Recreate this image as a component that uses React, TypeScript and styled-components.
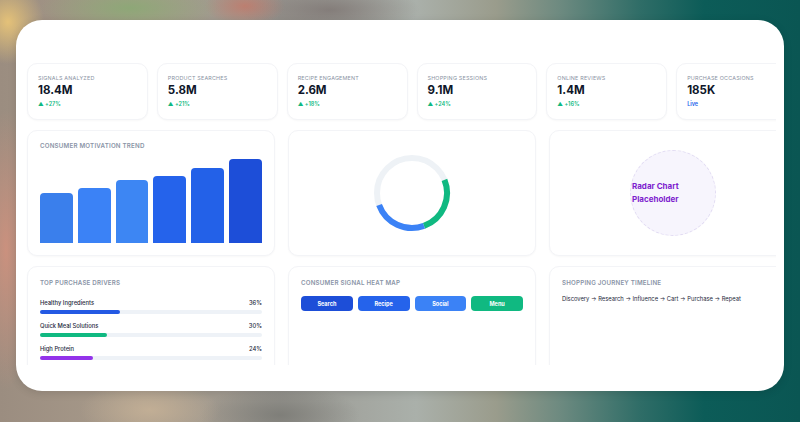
import React from 'react';
import styled, { createGlobalStyle } from 'styled-components';

const GlobalStyle = createGlobalStyle`
    * { box-sizing: border-box; }
    html, body { margin: 0; padding: 0; }
    body {
        font-family: Inter, "DejaVu Sans", sans-serif;
        background: #0b5b57;
    }
`

const stats = [
    { label: 'Signals Analyzed', value: '18.4M', change: '▲ +27%' },
    { label: 'Product Searches', value: '5.8M', change: '▲ +21%' },
    { label: 'Recipe Engagement', value: '2.6M', change: '▲ +18%' },
    { label: 'Shopping Sessions', value: '9.1M', change: '▲ +24%' },
    { label: 'Online Reviews', value: '1.4M', change: '▲ +16%' },
    { label: 'Purchase Occasions', value: '185K', change: 'Live', live: true },
];

const bars = [
    { h: 50, color: '#3a7fec' },
    { h: 55, color: '#3b82f6' },
    { h: 63, color: '#3d86f3' },
    { h: 67, color: '#2563eb' },
    { h: 75, color: '#2361e8' },
    { h: 84, color: '#1d4ed8' },
];

const drivers = [
    { name: 'Healthy Ingredients', pct: 36, color: '#2459e3' },
    { name: 'Quick Meal Solutions', pct: 30, color: '#10b981' },
    { name: 'High Protein', pct: 24, color: '#9333ea' },
];

const heat = [
    { name: 'Search', color: '#1d4ed8' },
    { name: 'Recipe', color: '#2563eb' },
    { name: 'Social', color: '#3b82f6' },
    { name: 'Menu', color: '#10b981' },
];

// arc on the donut, angles in degrees from 3 o'clock, clockwise
const arc = (from: number, to: number, r = 35, c = 40) => {
    const rad = (d: number) => (d * Math.PI) / 180;
    const x1 = c + r * Math.cos(rad(from));
    const y1 = c + r * Math.sin(rad(from));
    const x2 = c + r * Math.cos(rad(to));
    const y2 = c + r * Math.sin(rad(to));
    const large = to - from > 180 ? 1 : 0;
    return `M ${x1} ${y1} A ${r} ${r} 0 ${large} 1 ${x2} ${y2}`;
};

const Donut: React.FC = () => (
    <svg width="80" height="80" viewBox="0 0 80 80">
        <circle cx="40" cy="40" r="35" fill="none" stroke="#eef2f6" strokeWidth="6" />
        <path d={ arc(-22, 70) } fill="none" stroke="#10b981" strokeWidth="6" />
        <path d={ arc(70, 160) } fill="none" stroke="#3b82f6" strokeWidth="6" />
    </svg>
);

export default function App() {
    return (
        <Page>
            <GlobalStyle />
            <Panel>
                <Viewport>
                    <Dashboard>
                        <StatGrid>
                            { stats.map(s => (
                                <StatCard key={ s.label }>
                                    <StatLabel>{ s.label }</StatLabel>
                                    <StatValue>{ s.value }</StatValue>
                                    <StatChange live={ !!s.live }>{ s.change }</StatChange>
                                </StatCard>
                            )) }
                        </StatGrid>

                        <Row>
                            <ChartCard>
                                <CardTitle>Consumer Motivation Trend</CardTitle>
                                <Bars>
                                    { bars.map((b, i) => (
                                        <Bar key={ i } color={ b.color } style={{ height: b.h }} />
                                    )) }
                                </Bars>
                            </ChartCard>
                            <CenterCard>
                                <Donut />
                            </CenterCard>
                            <CenterCard>
                                <Radar>Radar Chart Placeholder</Radar>
                            </CenterCard>
                        </Row>

                        <Row>
                            <ListCard>
                                <CardTitle>Top Purchase Drivers</CardTitle>
                                <DriverList>
                                    { drivers.map(d => (
                                        <Driver key={ d.name }>
                                            <DriverHead>
                                                <span>{ d.name }</span>
                                                <span>{ d.pct }%</span>
                                            </DriverHead>
                                            <Track>
                                                <Fill color={ d.color } style={{ width: `${ d.pct }%` }} />
                                            </Track>
                                        </Driver>
                                    )) }
                                </DriverList>
                            </ListCard>
                            <ListCard>
                                <CardTitle>Consumer Signal Heat Map</CardTitle>
                                <HeatGrid>
                                    { heat.map(h => (
                                        <HeatCell key={ h.name } color={ h.color }>{ h.name }</HeatCell>
                                    )) }
                                </HeatGrid>
                            </ListCard>
                            <ListCard>
                                <CardTitle>Shopping Journey Timeline</CardTitle>
                                <Journey>Discovery → Research → Influence → Cart → Purchase → Repeat</Journey>
                            </ListCard>
                        </Row>
                    </Dashboard>
                </Viewport>
            </Panel>
        </Page>
    );
}

const Page = styled.div`
    display: flex;
    width: 800px;
    height: 422px;
    padding: 20px 16px 31px 16px;
    overflow: hidden;
    background:
        radial-gradient(ellipse 36px 42px at 8px 22px, rgba(232, 196, 120, 0.95), rgba(232, 196, 120, 0) 100%),
        radial-gradient(ellipse 90px 26px at 130px 8px, rgba(140, 168, 118, 0.95), rgba(140, 168, 118, 0) 100%),
        radial-gradient(ellipse 40px 20px at 245px 6px, rgba(196, 120, 104, 0.8), rgba(196, 120, 104, 0) 100%),
        radial-gradient(ellipse 90px 26px at 330px 10px, rgba(120, 110, 108, 0.7), rgba(120, 110, 108, 0) 100%),
        radial-gradient(ellipse 30px 140px at 6px 250px, rgba(205, 145, 126, 0.95), rgba(205, 145, 126, 0) 100%),
        radial-gradient(ellipse 70px 30px at 150px 410px, rgba(196, 176, 150, 0.9), rgba(196, 176, 150, 0) 100%),
        radial-gradient(ellipse 80px 30px at 280px 415px, rgba(120, 120, 115, 0.8), rgba(120, 120, 115, 0) 100%),
        linear-gradient(90deg, #9b8d80 0%, #a99c8c 18%, #9a9892 35%, #aab0aa 52%, #9a9c8c 62%, #6d8a80 70%, #2f6d67 80%, #0c5c58 88%, #0a5653 100%);
`

const Panel = styled.div`
    flex: 1;
    min-width: 0;
    display: flex;
    padding: 38px 8px 26px 6px;
    border-radius: 26px;
    background: #fff;
    box-shadow: 0 2px 8px rgba(0, 0, 0, 0.12);
`

const Viewport = styled.div`
    flex: 1;
    min-width: 0;
    padding: 5px 0 0 5px;
    overflow: hidden;
`

const Dashboard = styled.div`
    display: flex;
    flex-direction: column;
    gap: 10px;
    width: 770px;
`

const Card = styled.div`
    border: 1px solid #f3f4f7;
    border-radius: 10px;
    background: #fff;
    box-shadow: 0 1px 2px rgba(15, 23, 42, 0.03);
`

const StatGrid = styled.div`
    display: grid;
    grid-template-columns: repeat(6, 1fr);
    gap: 9px;
`

const StatCard = styled(Card)`
    height: 57px;
    padding: 10px 10px;
`

const StatLabel = styled.div`
    font-size: 5.4px;
    line-height: 8px;
    letter-spacing: 0.2px;
    text-transform: uppercase;
    color: #8a93a3;
`

const StatValue = styled.div`
    margin-top: 2px;
    font-size: 11.5px;
    line-height: 13px;
    font-weight: 700;
    color: #0f172a;
`

const StatChange = styled.div<{ live: boolean }>`
    margin-top: 3px;
    font-size: 5.5px;
    line-height: 8px;
    font-weight: 600;
    color: ${ props => props.live ? '#2563eb' : '#10b981' };
`

const Row = styled.div`
    display: grid;
    grid-template-columns: repeat(3, 1fr);
    gap: 13px;
`

const CardTitle = styled.div`
    font-size: 6.2px;
    line-height: 8px;
    font-weight: 600;
    letter-spacing: 0.2px;
    text-transform: uppercase;
    color: #8a94a6;
`

const ChartCard = styled(Card)`
    display: flex;
    flex-direction: column;
    height: 126px;
    padding: 11px 12px 12px 12px;
`

const Bars = styled.div`
    flex: 1;
    display: flex;
    align-items: flex-end;
    gap: 5px;
`

const Bar = styled.div<{ color: string }>`
    flex: 1;
    border-radius: 4px 4px 0 0;
    background: ${ props => props.color };
`

const CenterCard = styled(Card)`
    display: flex;
    align-items: center;
    justify-content: center;
    height: 126px;
`

const Radar = styled.div`
    display: flex;
    align-items: center;
    justify-content: center;
    width: 86px;
    height: 86px;
    padding: 0 1px;
    border: 1px dashed #e2dcf3;
    border-radius: 50%;
    background: #f7f5fd;
    font-size: 8px;
    line-height: 13px;
    font-weight: 700;
    color: #7e22ce;
`

const ListCard = styled(Card)`
    height: 126px;
    padding: 12px 12px;
`

const DriverList = styled.div`
    display: flex;
    flex-direction: column;
    gap: 8px;
    margin-top: 12px;
`

const Driver = styled.div`
    display: flex;
    flex-direction: column;
    gap: 3px;
`

const DriverHead = styled.div`
    display: flex;
    justify-content: space-between;
    font-size: 5.8px;
    line-height: 8px;
    font-weight: 500;
    color: #1e293b;
`

const Track = styled.div`
    height: 4px;
    border-radius: 2px;
    background: #eef2f7;
`

const Fill = styled.div<{ color: string }>`
    height: 100%;
    border-radius: 2px;
    background: ${ props => props.color };
`

const HeatGrid = styled.div`
    display: grid;
    grid-template-columns: repeat(4, 1fr);
    gap: 5px;
    margin-top: 9px;
`

const HeatCell = styled.div<{ color: string }>`
    display: flex;
    align-items: center;
    justify-content: center;
    height: 15px;
    border-radius: 4px;
    background: ${ props => props.color };
    font-size: 5.5px;
    font-weight: 700;
    color: #fff;
`

const Journey = styled.div`
    margin-top: 8px;
    font-size: 5.8px;
    line-height: 8px;
    color: #1e293b;
`
